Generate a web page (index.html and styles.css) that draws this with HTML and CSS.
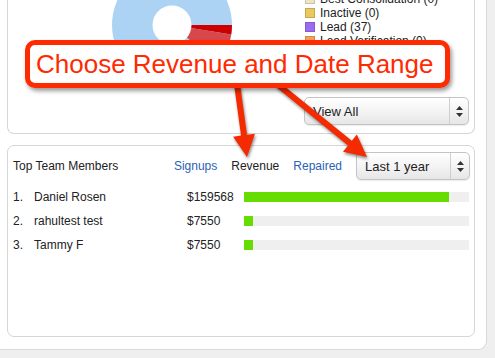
FILE: index.html
```html
<!DOCTYPE html>
<html>
<head>
<meta charset="utf-8">
<link rel="stylesheet" href="styles.css">
</head>
<body>
<div class="page">
  <div class="panel">
    <div class="card card-top">
      <svg class="pie" width="120" height="120" viewBox="0 0 120 120">
        <circle cx="60" cy="60" r="60" fill="#acd3f4"/>
        <path d="M60 60 L120 60 A60 60 0 0 1 119.26 69.39 Z" fill="#cc0000"/>
        <path d="M60 60 L119.26 69.39 A60 60 0 0 1 105.96 98.57 Z" fill="#d8474a"/>
        <circle cx="60" cy="60" r="19.5" fill="#fff"/>
      </svg>
      <div class="legend-col">
        <ul class="legend">
          <li><span class="sw sw-best"></span>Best Consolidation (0)</li>
          <li><span class="sw sw-inactive"></span>Inactive (0)</li>
          <li><span class="sw sw-lead"></span>Lead (37)</li>
          <li><span class="sw sw-verif"></span>Lead Verification (0)</li>
        </ul>
        <div class="select select-view">
          <span class="select-label">View All</span>
          <span class="select-btn"><svg width="7" height="11" viewBox="0 0 7 11"><path d="M3.5 0 L7 4 L0 4 Z M0 7 L7 7 L3.5 11 Z" fill="#333"/></svg></span>
        </div>
      </div>
    </div>
    <div class="card card-team">
      <div class="team-head">
        <span class="team-title">Top Team Members</span>
        <span class="tab tab-link">Signups</span>
        <span class="tab tab-active">Revenue</span>
        <span class="tab tab-link">Repaired</span>
        <div class="select select-range">
          <span class="select-label">Last 1 year</span>
          <span class="select-btn"><svg width="7" height="11" viewBox="0 0 7 11"><path d="M3.5 0 L7 4 L0 4 Z M0 7 L7 7 L3.5 11 Z" fill="#333"/></svg></span>
        </div>
      </div>
      <ol class="team-list">
        <li class="row"><span class="num">1.</span><span class="name">Daniel Rosen</span><span class="amt">$159568</span><span class="track"><span class="fill" style="width:205px"></span></span></li>
        <li class="row"><span class="num">2.</span><span class="name">rahultest test</span><span class="amt">$7550</span><span class="track"><span class="fill" style="width:9px"></span></span></li>
        <li class="row"><span class="num">3.</span><span class="name">Tammy F</span><span class="amt">$7550</span><span class="track"><span class="fill" style="width:9px"></span></span></li>
      </ol>
    </div>
  </div>

  <svg class="arrows" width="495" height="358" viewBox="0 0 495 358">
    <polygon points="234.03,84.41 241.03,135.61 233.1,136.69 247,157 254.9,133.71 246.97,134.79 239.97,83.59" fill="#f42a00"/>
    <polygon points="275.11,86.33 348.03,145.47 342.99,151.68 367,157 356.85,134.6 351.81,140.81 278.89,81.67" fill="#f42a00"/>
  </svg>
  <div class="callout">Choose Revenue and Date Range</div>
</div>
</body>
</html>
```

FILE: styles.css
```css
* { box-sizing: border-box; }
html, body {
  margin: 0;
  padding: 0;
  background: #efefef;
  font-family: "Liberation Sans", Arial, Helvetica, sans-serif;
  color: #222;
}
.page {
  position: relative;
  width: 495px;
  height: 358px;
  overflow: hidden;
}
.panel {
  width: 487px;
  height: 350px;
  background: #fff;
  border-right: 1px solid #d9d9d9;
  border-bottom: 1px solid #d9d9d9;
  border-bottom-right-radius: 9px;
  padding: 0 11px 12px 7px;
  display: flex;
  flex-direction: column;
}
.card {
  background: #fff;
  border: 1px solid #d6d6d6;
  border-radius: 7px;
}
.card-top {
  height: 134px;
  border-top: none;
  border-top-left-radius: 0;
  border-top-right-radius: 0;
  display: flex;
  overflow: hidden;
}
.pie {
  display: block;
  margin: -35px 0 0 104px;
  flex: none;
}
.legend-col {
  margin-left: 73px;
  display: flex;
  flex-direction: column;
}
.legend {
  list-style: none;
  margin: -8px 0 0 0;
  padding: 0;
  font-size: 12px;
}
.legend li {
  height: 14px;
  line-height: 14px;
  display: flex;
  align-items: center;
  white-space: nowrap;
}
.sw {
  width: 10px;
  height: 10px;
  margin-right: 5px;
  border: 1px solid rgba(0,0,0,0.15);
}
.sw-best { background: #efe3c4; }
.sw-inactive { background: #ecc85c; }
.sw-lead { background: #9a6cf0; }
.sw-verif { background: #f3a15c; }

.select {
  display: flex;
  align-items: center;
  height: 28px;
  border: 1px solid #c4c4c4;
  border-radius: 5px;
  background: linear-gradient(#ffffff, #f4f4f4 50%, #e6e6e6);
  box-shadow: 0 1px 1px rgba(0,0,0,0.08);
  font-size: 13px;
  color: #222;
}
.select-label {
  flex: 1;
  padding-left: 8px;
}
.select-btn {
  width: 19px;
  height: 100%;
  border-left: 1px solid #cfcfcf;
  display: flex;
  align-items: center;
  justify-content: center;
}
.select-btn svg { display: block; }
.select-view {
  width: 165px;
  margin-top: 49px;
  margin-left: -1px;
}

.card-team {
  margin-top: 11px;
  height: 192px;
  padding: 6px 4px 0 5px;
}
.team-head {
  display: flex;
  align-items: center;
  height: 28px;
  font-size: 12px;
}
.team-title { flex: 1; }
.tab { margin-right: 14px; }
.tab-link { color: #2a62b6; }
.tab-active { color: #222; }
.select-range {
  width: 114px;
}
.team-list {
  list-style: none;
  margin: 5px 0 0 0;
  padding: 0;
  font-size: 12px;
}
.row {
  display: grid;
  grid-template-columns: 21px 153px 57px 225px;
  align-items: center;
  height: 24px;
}
.track {
  display: block;
  height: 10px;
  background: #efefef;
}
.fill {
  display: block;
  height: 10px;
  background: #66dd00;
}

.arrows {
  position: absolute;
  left: 0;
  top: 0;
  filter: drop-shadow(1px 2px 1.5px rgba(0,0,0,0.45));
}
.callout {
  position: absolute;
  left: 25px;
  top: 40px;
  width: 425px;
  height: 48px;
  border: 5px solid #ff2a00;
  border-radius: 10px;
  background: #fff;
  box-shadow: 2px 3px 4px rgba(0,0,0,0.4);
  color: #ff2a00;
  font-size: 26px;
  line-height: 38px;
  padding-left: 6px;
  white-space: nowrap;
}
```
